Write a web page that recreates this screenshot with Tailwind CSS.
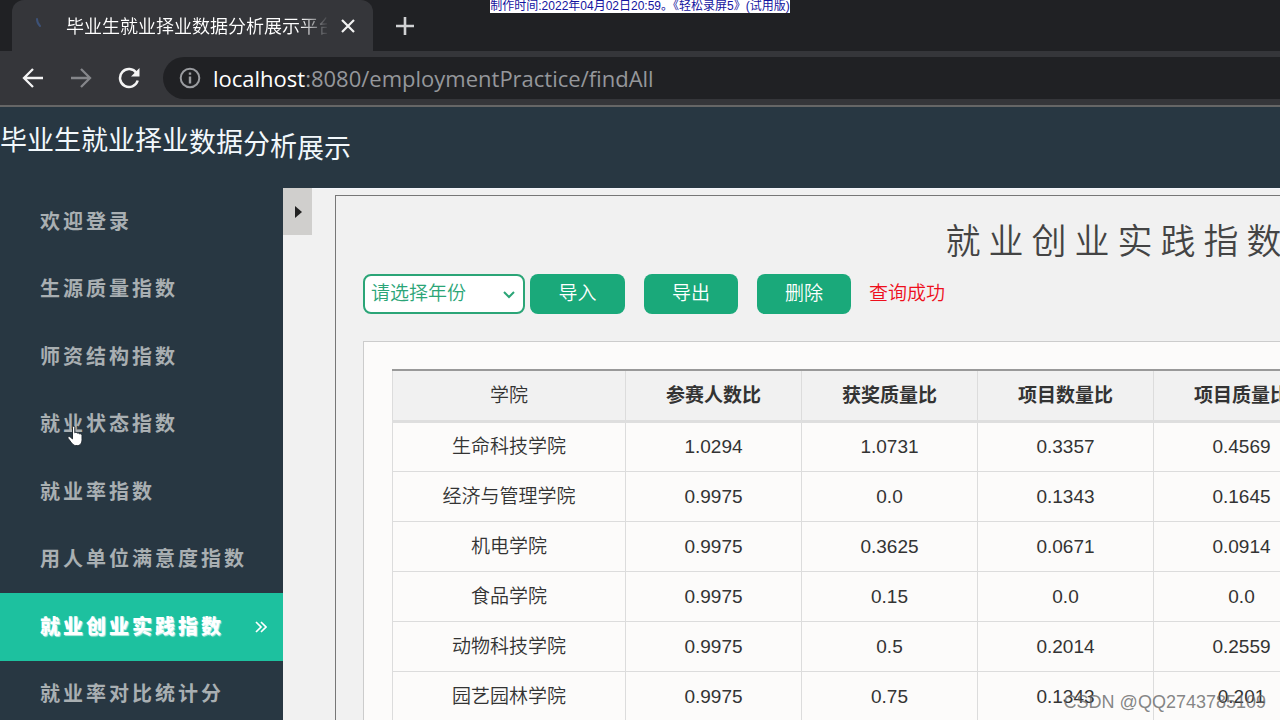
<!DOCTYPE html>
<html lang="zh-CN">
<head>
<meta charset="utf-8">
<title>毕业生就业择业数据分析展示平台</title>
<script src="https://cdn.jsdelivr.net/npm/@tailwindcss/browser@4"></script>
</head>
<body class="relative flex h-screen flex-col overflow-hidden bg-[#f1f1f1] font-['Liberation_Sans','Noto_Sans_CJK_SC',sans-serif] text-[19px] text-[#333]">

<!-- Tab strip -->
<div class="flex h-[51px] shrink-0 items-end bg-[#202124] pl-3">
  <div class="flex h-full w-[361px] shrink-0 items-center rounded-t-xl bg-[#35363a] pl-[22px] pr-4">
    <svg class="mb-2 h-5 w-4 shrink-0" viewBox="0 0 16 20" fill="none" stroke="#3d5277" stroke-width="2" stroke-linecap="round"><path d="M3 7c0 3 1 5 3 7"/></svg>
    <div class="ml-4 flex-1 overflow-hidden whitespace-nowrap bg-linear-to-r from-white from-90% to-[#45464a] bg-clip-text pt-0.5 text-[18px] leading-6 text-transparent">毕业生就业择业数据分析展示平台</div>
    <button aria-label="关闭标签页" class="ml-3 shrink-0 p-0.5">
      <svg class="h-[14px] w-[14px]" viewBox="0 0 14 14" stroke="#f1f1f1" stroke-width="2.2"><path d="M1 1l12 12M13 1L1 13"/></svg>
    </button>
  </div>
  <button aria-label="新标签页" class="ml-[22px] self-center">
    <svg class="h-5 w-5" viewBox="0 0 20 20" stroke="#d0d1d3" stroke-width="2.6"><path d="M10 1v18M1 10h18"/></svg>
  </button>
</div>

<!-- Address bar -->
<div class="flex h-14 shrink-0 items-center border-b-2 border-[#666] bg-[#35363a] pl-[22px]">
  <button aria-label="后退" class="shrink-0"><svg class="h-[22px] w-[22px]" viewBox="0 0 22 22" fill="none" stroke="#f4f4f4" stroke-width="2.3"><path d="M21 11H2.500M11 2L2 11l9 9"/></svg></button>
  <button aria-label="前进" class="ml-[26px] shrink-0"><svg class="h-[22px] w-[22px]" viewBox="0 0 22 22" fill="none" stroke="#85868a" stroke-width="2.3"><path d="M1 11h18.500M11 2l9 9-9 9"/></svg></button>
  <button aria-label="重新加载" class="ml-[26px] shrink-0"><svg class="h-[22px] w-[22px]" viewBox="0 0 22 22" fill="none" stroke="#f4f4f4" stroke-width="2.5"><path d="M18.500 6A9 9 0 1 0 19.700 13.500"/><path d="M21.500 1v8.500H13z" fill="#f4f4f4" stroke="none"/></svg></button>
  <div class="ml-[23px] flex h-[42px] flex-1 items-center rounded-l-full bg-[#202124] pl-4 font-['Open_Sans','Noto_Sans',sans-serif] text-[22px]">
    <svg class="h-[22px] w-[22px] shrink-0" viewBox="0 0 22 22" fill="none" stroke="#9a9ca0" stroke-width="2"><circle cx="11" cy="11" r="9.300"/><path d="M11 9.500v7M11 5.500v2.300" stroke-width="2.400"/></svg>
    <a href="#" class="ml-3 whitespace-nowrap text-[#95979b]"><span class="text-white">localhost</span>:8080/employmentPractice/findAll</a>
  </div>
</div>

<!-- Site header, the letters run in a wave -->
<header class="flex h-[81px] shrink-0 items-start bg-[#283742] pt-4 text-[27px] leading-9 text-[#f2f8fc]">
  <span>毕业生就业择业</span><span class="pt-0.5">数据</span><span class="pt-1">分</span><span class="pt-1.5">析</span><span class="pt-2">展示</span>
</header>

<div class="flex min-h-0 flex-1">
  <nav class="w-[283px] shrink-0 overflow-hidden bg-[#283742] text-[20px] font-bold tracking-[3px] text-[#a9afb2]">
    <div class="flex h-[540px] flex-col whitespace-nowrap *:flex *:flex-1 *:items-center *:pl-10 *:pr-4">
      <a href="#">欢迎登录</a>
      <a href="#">生源质量指数</a>
      <a href="#">师资结构指数</a>
      <a href="#">就业状态指数</a>
      <a href="#">就业率指数</a>
      <a href="#">用人单位满意度指数</a>
      <a href="#" aria-current="page" class="justify-between bg-[#1dc19f] font-black text-white text-shadow-[1px_1px_1px_#ffffffb0]">就业创业实践指数
        <svg class="h-3 w-3 shrink-0" viewBox="0 0 12 12" fill="none" stroke="#fff" stroke-width="1.700"><path d="M1 1l5 5-5 5M6 1l5 5-5 5"/></svg></a>
      <a href="#">就业率对比统计分</a>
    </div>
  </nav>

  <button aria-label="收起菜单" class="flex h-[47px] w-[29px] shrink-0 items-center justify-center bg-[#d0cfcd]">
    <svg class="h-3 w-2" viewBox="0 0 8 12"><path d="M1 0l7 6-7 6z" fill="#222"/></svg>
  </button>

  <main class="min-w-0 flex-1 overflow-hidden border-t border-[#f3f6fb] pl-[23px] pt-1.5">
    <section class="h-full w-[1537px] border-l border-t border-[#777] pl-[27px]">
      <h1 class="pt-[22px] text-center text-[35px] font-[350] leading-[48px] tracking-[8px] text-[#444]">就业创业实践指数</h1>
      <div class="mt-2 flex h-10 items-center font-[350]">
        <div class="relative h-full w-[162px]">
          <select aria-label="年份" class="h-full w-full appearance-none rounded-lg border-2 border-[#2ba577] bg-white pl-1.5 text-[#2ba577]"><option>请选择年份</option></select>
          <svg class="pointer-events-none absolute right-2.5 top-4 h-2.5 w-3" viewBox="0 0 12 10" fill="none" stroke="#2ba577" stroke-width="2"><path d="M1 2l5 5 5-5"/></svg>
        </div>
        <button class="ml-[5px] h-full w-[95px] rounded-lg bg-[#1aa97a] text-white">导入</button>
        <button class="ml-[19px] h-full w-[94px] rounded-lg bg-[#1aa97a] text-white">导出</button>
        <button class="ml-[19px] h-full w-[94px] rounded-lg bg-[#1aa97a] text-white">删除</button>
        <span class="ml-[18px] text-[#ee0f1c]">查询成功</span>
      </div>
      <div class="mt-[27px] border border-[#ccc] bg-[#fcfbfa] pl-7 pt-[27px]">
        <table class="w-[938px] table-fixed border-collapse text-center *:*:*:border *:*:*:border-[#dcdcdc] *:*:*:pt-0.5">
          <colgroup><col class="w-[233px]"><col><col><col><col></colgroup>
          <thead class="bg-[#f1f1f1]">
            <tr class="h-[51px] border-t-2 border-b-3 border-t-[#999] border-b-[#dedede]"><th class="border-t-2! border-t-[#999]! font-[350]">学院</th><th class="border-t-2! border-t-[#999]!">参赛人数比</th><th class="border-t-2! border-t-[#999]!">获奖质量比</th><th class="border-t-2! border-t-[#999]!">项目数量比</th><th class="border-t-2! border-t-[#999]!">项目质量比</th></tr>
          </thead>
          <tbody class="*:h-[50px]">
            <tr><td class="font-[350]">生命科技学院</td><td>1.0294</td><td>1.0731</td><td>0.3357</td><td>0.4569</td></tr>
            <tr><td class="font-[350]">经济与管理学院</td><td>0.9975</td><td>0.0</td><td>0.1343</td><td>0.1645</td></tr>
            <tr><td class="font-[350]">机电学院</td><td>0.9975</td><td>0.3625</td><td>0.0671</td><td>0.0914</td></tr>
            <tr><td class="font-[350]">食品学院</td><td>0.9975</td><td>0.15</td><td>0.0</td><td>0.0</td></tr>
            <tr><td class="font-[350]">动物科技学院</td><td>0.9975</td><td>0.5</td><td>0.2014</td><td>0.2559</td></tr>
            <tr><td class="font-[350]">园艺园林学院</td><td>0.9975</td><td>0.75</td><td>0.1343</td><td>0.201</td></tr>
          </tbody>
        </table>
      </div>
    </section>
  </main>
</div>

<!-- Overlays: recorder stamp, mouse pointer, watermark -->
<div class="absolute left-[490px] top-0 flex h-[13px] w-[300px] items-center justify-center whitespace-nowrap bg-white text-[12px] leading-[13px] text-[#1414a0]">制作时间:2022年04月02日20:59。《轻松录屏5》(试用版)</div>
<svg class="absolute left-[67px] top-[425px] h-[22px] w-4" viewBox="0 0 16 22" fill="#fff" stroke="#222b33" stroke-width="1"><path d="M5.500 2.500c0-1.700 2.300-1.700 2.300 0v5.300c.5-.9 2.100-.7 2.300.4.700-.7 2-.3 2.200.7.900-.5 2.700 0 2.700 1.700v4c0 3-1.500 6-4.500 6H8.700C6 20.600 4 17 1.200 13.500c-1-1.600.8-2.600 2-1.600l2.300 2z"/></svg>
<div class="absolute bottom-1.5 right-3.5 text-[18px] leading-6 text-[#666]/80">CSDN @QQ2743785109</div>
</body>
</html>
